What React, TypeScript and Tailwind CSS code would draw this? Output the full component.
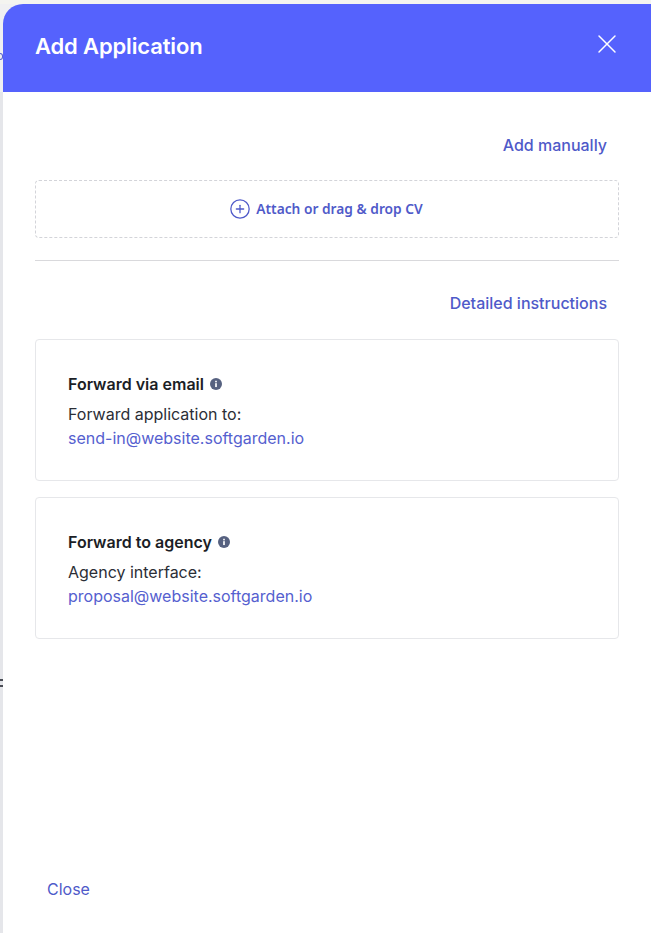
import React from 'react'
import { X, CirclePlus } from 'lucide-react'

function InfoDot() {
  return (
    <svg width="12" height="12" viewBox="0 0 13 13" className="shrink-0">
      <circle cx="6.5" cy="6.5" r="6.5" fill="#566180" />
      <rect x="5.6" y="5.6" width="1.8" height="4.2" fill="#fff" />
      <rect x="5.6" y="3" width="1.8" height="1.7" fill="#fff" />
    </svg>
  )
}

function ForwardCard({ title, label, email }: { title: string; label: string; email: string }) {
  return (
    <div className="h-[142px] rounded border border-[#e6e7ea] pl-[32px] pt-[33px]">
      <div className="flex h-[22px] items-center gap-[6px] text-[16px] leading-[22px] font-semibold text-[#1b1e26]">
        {title}
        <InfoDot />
      </div>
      <div className="mt-[7px] text-[16px] leading-[24px] text-[#2b2e36]">{label}</div>
      <div className="text-[16px] leading-[24px] text-[#5560cf]">{email}</div>
    </div>
  )
}

export default function App() {
  return (
    <div className="flex h-[933px] w-[651px] flex-col overflow-hidden bg-[#e8e9ec] font-['Inter',sans-serif]">
      <div className="h-1 shrink-0 bg-[#f4f4f0]" />
      <div className="flex flex-1">
        {/* sliver of the page behind the drawer */}
        <div className="relative w-[3px] shrink-0 overflow-hidden bg-[#e5e6ea]">
          <div className="h-[88px] bg-[#f0f0f2]" />
          <div className="absolute top-[49px] left-0 h-[7px] w-[3px] rounded-r-sm border-y border-r border-[#5560cf]" />
          <div className="absolute top-[675px] left-0 h-[8px] w-[3px] border-y-2 border-[#4a4d55]" />
        </div>
        <div className="flex flex-1 flex-col bg-white">
          <div className="bg-[#f0f0f2]">
            <header className="flex h-[88px] items-start justify-between rounded-tl-[20px] bg-[#5562fd] pl-[32px] pr-[28px]">
              <h1 className="mt-[26px] text-[22px] leading-[32px] font-semibold tracking-[-0.15px] text-white">Add Application</h1>
              <X className="mt-[24px] h-[32px] w-[32px] text-white" strokeWidth={1.1} />
            </header>
          </div>

          <main className="flex flex-1 flex-col px-[32px]">
            <div className="mt-[41px] flex justify-end pr-[12px] text-[16px] leading-[24px] font-[450] text-[#4f5ac9]">Add manually</div>

            <div className="mt-[23px] flex h-[58px] items-center justify-center gap-[5px] rounded border border-dashed border-[#d3d4d9] pr-[2px] font-['Noto_Sans',sans-serif] text-[13.75px] font-semibold text-[#4f5ac9]">
              <CirclePlus className="h-[22px] w-[22px]" strokeWidth={1.4} />
              <span className="mt-px">Attach or drag &amp; drop CV</span>
            </div>

            <div className="mt-[22px] border-t border-[#d9d9dc]" />

            <div className="mt-[30px] flex justify-end pr-[12px] text-[16px] leading-[24px] font-[450] text-[#4f5ac9]">Detailed instructions</div>

            <div className="mt-[24px] flex flex-col gap-[16px]">
              <ForwardCard title="Forward via email" label="Forward application to:" email="send-in@website.softgarden.io" />
              <ForwardCard title="Forward to agency" label="Agency interface:" email="proposal@website.softgarden.io" />
            </div>

            <div className="mt-auto mb-[32px] pl-[12px] text-[16px] leading-[24px] text-[#4f5ac9]">Close</div>
          </main>
        </div>
      </div>
    </div>
  )
}
